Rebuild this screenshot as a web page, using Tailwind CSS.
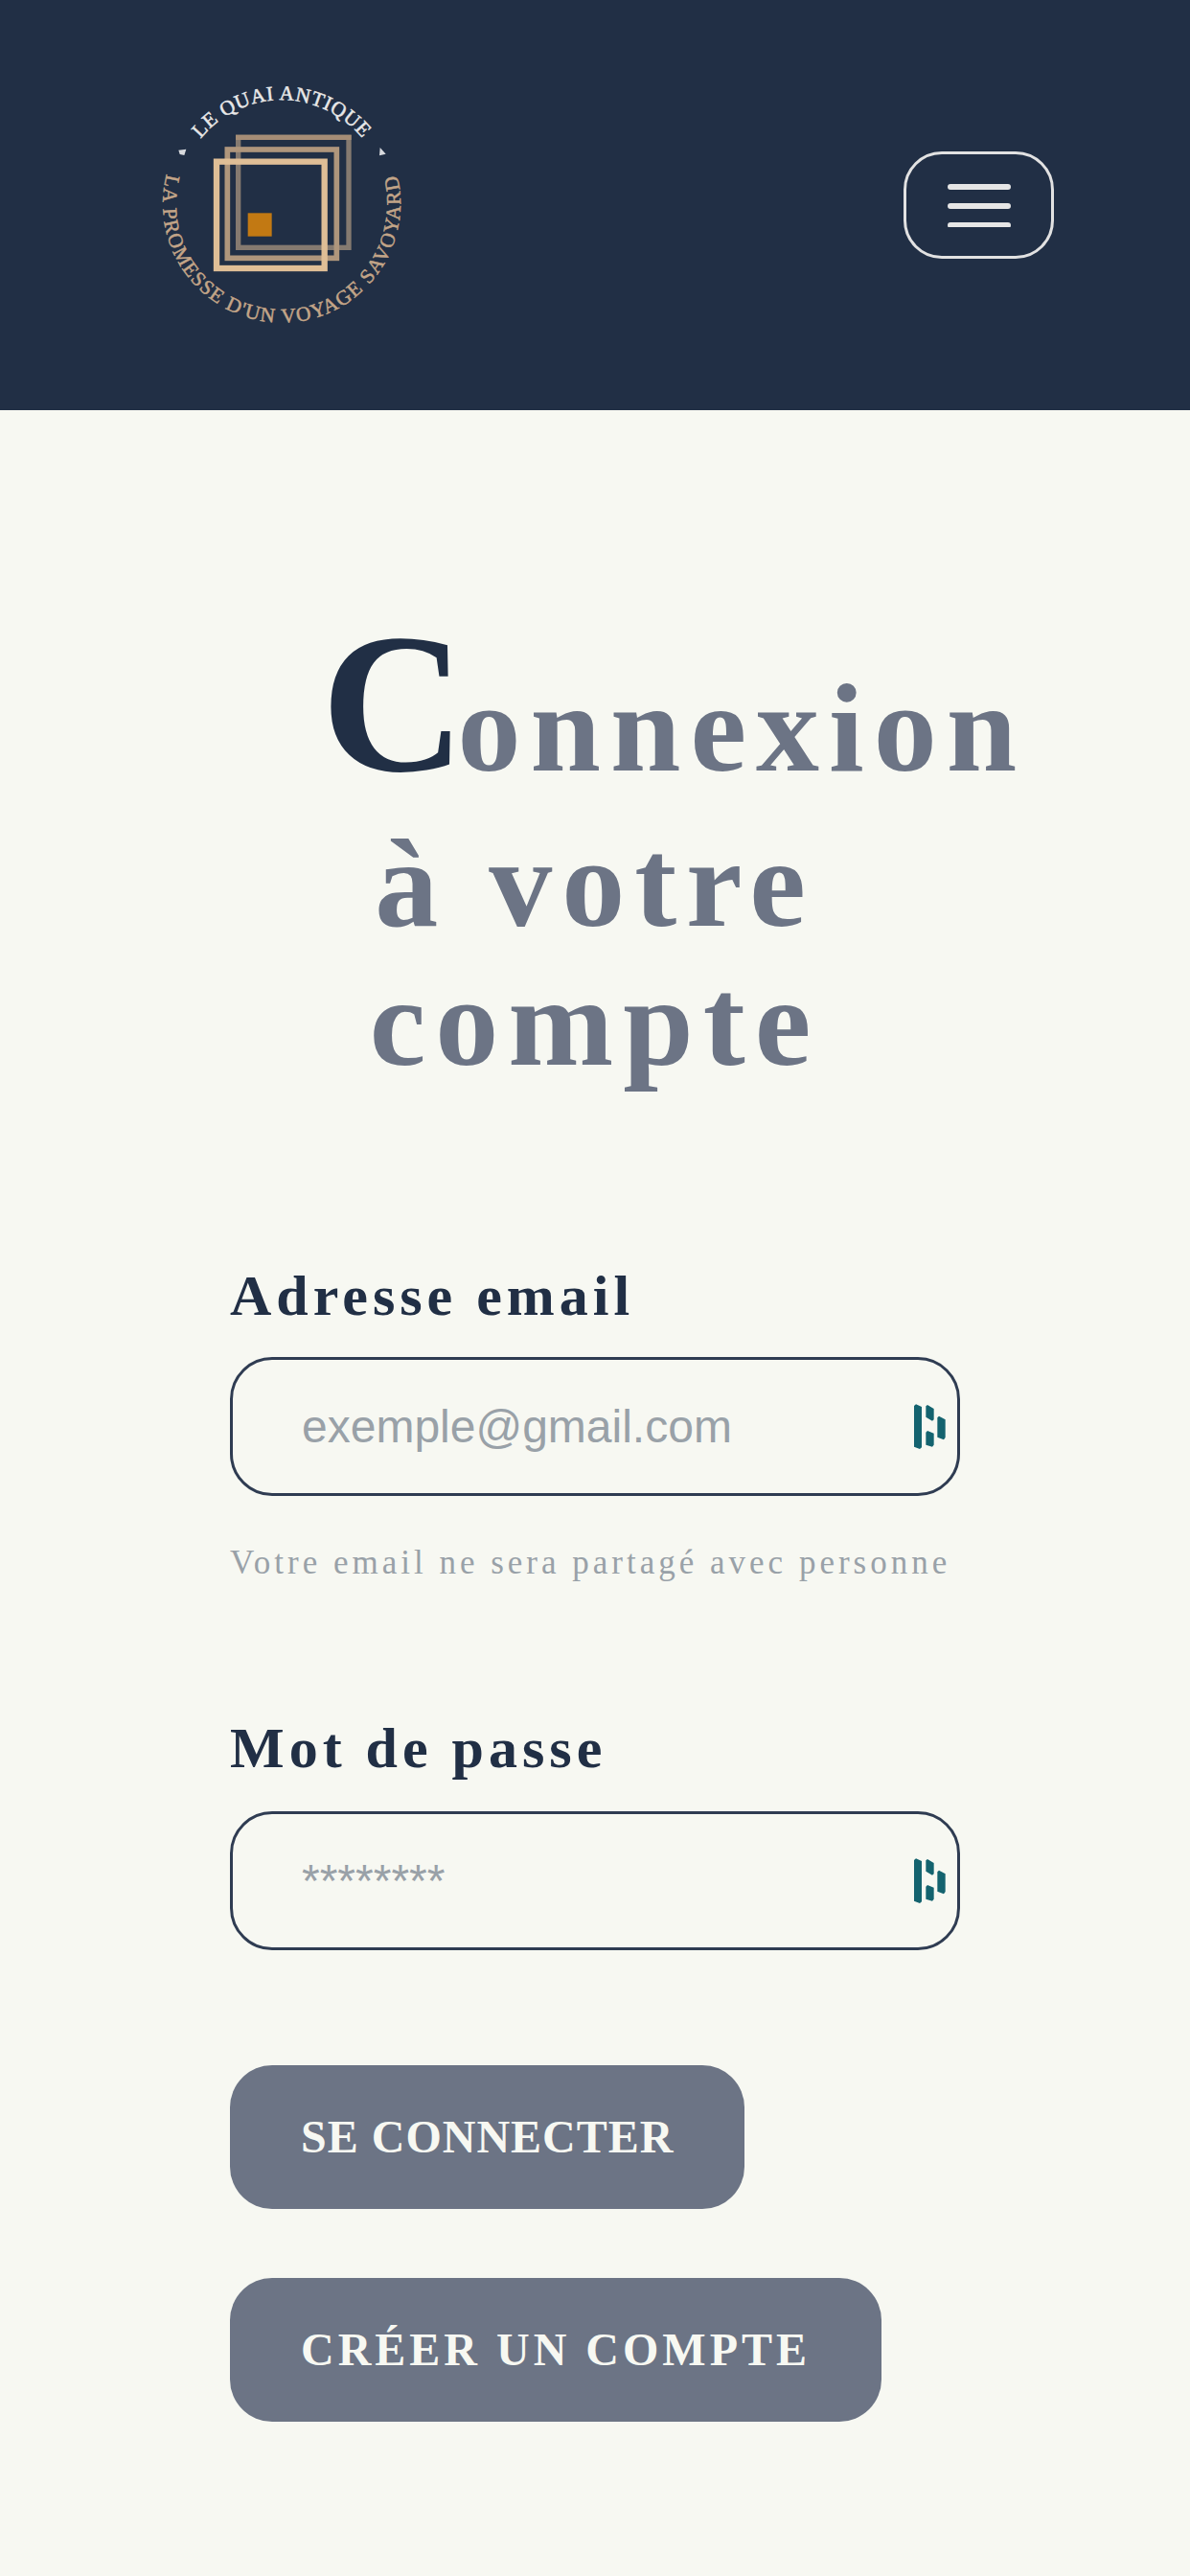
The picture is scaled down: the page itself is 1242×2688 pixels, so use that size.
<!DOCTYPE html>
<html lang="fr">
<head>
<meta charset="utf-8">
<meta name="viewport" content="width=device-width, initial-scale=1">
<title>Connexion – Le Quai Antique</title>
<script src="https://cdn.jsdelivr.net/npm/@tailwindcss/browser@4"></script>
</head>
<body class="min-h-screen bg-[#f7f8f2] font-['Liberation_Serif',serif] text-[#212f45]">
<header class="flex h-[428px] items-center justify-between bg-[#212f45] pr-[142px] pl-[140px]">
  <a href="#" aria-label="Le Quai Antique, accueil">
    <svg class="h-[300px] w-[310px]" viewBox="0 12 930 900" fill="none" font-family="Liberation Serif, serif" font-size="64">
      <defs>
        <path id="arc-top" d="M137 458A325 325 0 0 1 787 458"/>
        <path id="arc-bottom" d="M140 272A372 372 0 1 0 784 272"/>
      </defs>
      <text fill="#e8e8e8" stroke="#e8e8e8" stroke-width="1.5" letter-spacing="2" text-anchor="middle"><textPath href="#arc-top" startOffset="50%">LE QUAI ANTIQUE</textPath></text>
      <text fill="#c3a588" stroke="#c3a588" stroke-width="1.5" letter-spacing="4" text-anchor="middle"><textPath href="#arc-bottom" startOffset="50%">LA PROMESSE D'UN VOYAGE SAVOYARD</textPath></text>
      <path d="M139 290l24-3-6 19-14-3zM770 282l18 20-20 5z" fill="#d8dade"/>
      <rect x="326" y="250" width="346" height="345" stroke="#857a70" stroke-width="16"/>
      <path d="M318 250H680" stroke="#a58d76" stroke-width="16"/>
      <rect x="292" y="288" width="342" height="340" stroke="#af967c" stroke-width="17"/>
      <rect x="258" y="326" width="338" height="334" stroke="#dfbe96" stroke-width="19"/>
      <rect x="356" y="487" width="75" height="73" fill="#c27913"/>
    </svg>
  </a>
  <button type="button" aria-label="Menu" class="flex h-[112px] w-[157px] items-center justify-center rounded-[40px] border-3 border-[#e2e2e2]">
    <svg class="h-[46px] w-[66px]" viewBox="0 0 66 46" stroke="#e6e6e6" stroke-width="6" stroke-linecap="round"><path d="M3 4H63M3 24H63M3 44H63"/></svg>
  </button>
</header>

<main class="pt-[192px] pb-[158px]">
  <h1 class="mx-auto w-[46%] text-center text-[132px] leading-[145px] font-bold tracking-[10px] text-[#6c7485]"><span class="text-[208px] leading-[229px] tracking-[-8px] text-[#212f45]">C</span>onnexion à votre compte</h1>

  <form class="mx-auto mt-[177px] flex w-[762px] max-w-full flex-col items-start">
    <label for="email" class="text-[60px] leading-[72px] font-bold tracking-[5px]">Adresse email</label>
    <div class="relative mt-[28px] w-full">
      <input id="email" type="email" placeholder="exemple@gmail.com" aria-describedby="email-aide" class="block h-[145px] w-full rounded-[44px] border-3 border-[#2f3c52] bg-transparent px-[72px] font-['Liberation_Sans',sans-serif] text-[48px] placeholder:text-[#99a1a8]">
      <svg class="absolute top-[49px] right-[14px] h-[48px] w-[34px]" viewBox="0 0 102 144" fill="#14636f"><path d="M0 6l6-5 18 8v127l-6 5-18-7zM37 7l5-4 20 12v34l-5 4-20-12zM37 89l5-5 20 8v36l-5 6-20-6zM73 43l5-5 20 11v56l-5 7-20-8z"/></svg>
    </div>
    <p id="email-aide" class="mt-[50px] text-[35px] leading-[40px] tracking-[4px] whitespace-nowrap text-[#99a1a8]">Votre email ne sera partagé avec personne</p>

    <label for="password" class="mt-[137px] text-[60px] leading-[72px] font-bold tracking-[5px]">Mot de passe</label>
    <div class="relative mt-[30px] w-full">
      <input id="password" type="password" placeholder="********" class="block h-[145px] w-full rounded-[44px] border-3 border-[#2f3c52] bg-transparent px-[72px] font-['Liberation_Sans',sans-serif] text-[48px] placeholder:text-[#99a1a8]">
      <svg class="absolute top-[49px] right-[14px] h-[48px] w-[34px]" viewBox="0 0 102 144" fill="#14636f"><path d="M0 6l6-5 18 8v127l-6 5-18-7zM37 7l5-4 20 12v34l-5 4-20-12zM37 89l5-5 20 8v36l-5 6-20-6zM73 43l5-5 20 11v56l-5 7-20-8z"/></svg>
    </div>

    <div class="mt-[120px] flex flex-col items-start gap-[72px]">
      <button type="submit" class="flex h-[150px] items-center rounded-[44px] bg-[#6c7485] px-[74px] text-[48px] font-bold tracking-[1px] text-[#f7f8f2]">SE CONNECTER</button>
      <a href="#" class="flex h-[150px] items-center rounded-[44px] bg-[#6c7485] px-[74px] text-[48px] font-bold tracking-[4px] text-[#f7f8f2]">CRÉER UN COMPTE</a>
    </div>
  </form>
</main>
</body>
</html>
